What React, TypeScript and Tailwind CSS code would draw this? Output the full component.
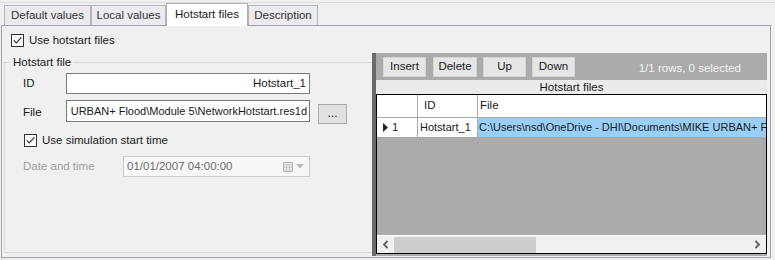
import React from "react";

const tabs = [
  { label: "Default values", w: "w-[87px]" },
  { label: "Local values", w: "w-[75px]" },
  { label: "Hotstart files", w: "w-[82px]", active: true },
  { label: "Description", w: "w-[70px]" },
];

const fullPath =
  "C:\\Users\\nsd\\OneDrive - DHI\\Documents\\MIKE URBAN+ Flood\\Module 5\\NetworkHotstart.res1d";

function Check() {
  return (
    <span className="flex h-[13px] w-[13px] shrink-0 items-center justify-center border border-[#333] bg-white">
      <svg width="11" height="11" viewBox="0 0 11 11">
        <path d="M1.8 5.4 L4.2 7.9 L9.4 2.3" fill="none" stroke="#333" strokeWidth="1.2" />
      </svg>
    </span>
  );
}

function ToolButton({ label, w }: { label: string; w: string }) {
  return (
    <div className={`flex h-[20px] ${w} items-center justify-center border border-[#d6d6d6] bg-[#e6e6e6] text-[#1a1a1a]`}>
      {label}
    </div>
  );
}

export default function App() {
  return (
    <div className="h-[260px] w-[775px] overflow-hidden bg-[#f0f0f0] font-['Liberation_Sans',Arial,sans-serif] text-[11px] text-[#1a1a1a]">
      <div className="h-[2px]" />
      <div className="border-t border-[#dcdcdc]" />

      {/* tab strip */}
      <div className="relative z-10 -mb-px flex h-[23px] items-end pl-[4px] text-[11.5px]">
        {tabs.map((t) =>
          t.active ? (
            <div
              key={t.label}
              className={`flex h-[23px] ${t.w} items-center justify-center border border-b-0 border-[#b0b0b8] bg-white pb-[1px]`}
            >
              {t.label}
            </div>
          ) : (
            <div
              key={t.label}
              className={`mb-[1px] flex h-[20px] ${t.w} items-center justify-center border border-b-0 border-[#b4b4bc] bg-[#ebebef] text-[#333]`}
            >
              {t.label}
            </div>
          )
        )}
      </div>

      {/* tab page */}
      <div className="ml-[1px] flex h-[233px] w-[770px] flex-col border border-[#a0a0aa]">
        <div className="flex h-[27px] items-start gap-[5px] pl-[9px] pt-[8px] text-[11.5px]">
          <Check />
          <span className="leading-[13px]">Use hotstart files</span>
        </div>

        <div className="flex h-[204px]">
          {/* left: group box */}
          <div className="w-[370px] pl-[2px] pt-[9px]">
            <div className="relative h-[191px] border-b border-l border-t border-[#d8d8d8] pl-[18px] pt-[10px]">
              <span className="absolute -top-[8px] left-[6px] bg-[#f0f0f0] px-[2px] text-[11.5px] leading-[14px]">
                Hotstart file
              </span>

              <div className="flex h-[21px] items-center">
                <span className="w-[43px] text-[11.5px]">ID</span>
                <div className="flex h-[21px] w-[244px] items-center justify-end border border-[#7a7a7a] bg-white px-[3px] text-[11.5px]">
                  Hotstart_1
                </div>
              </div>

              <div className="mt-[6px] flex items-start">
                <span className="w-[43px] pt-[4px] text-[11.5px]">File</span>
                <div className="flex h-[22px] w-[244px] items-center justify-end overflow-hidden whitespace-nowrap border border-[#7a7a7a] bg-white px-[2px]">
                  <span className="shrink-0">{fullPath}</span>
                </div>
                <div className="ml-[8px] mt-[4px] flex h-[20px] w-[29px] items-center justify-center border border-[#adadad] bg-[#e1e1e1] pb-[2px] text-[12px]">
                  ...
                </div>
              </div>

              <div className="mt-[10px] flex items-center gap-[5px] pl-[1px] text-[11.5px]">
                <Check />
                <span className="leading-[13px]">Use simulation start time</span>
              </div>

              <div className="mt-[9px] flex items-center">
                <span className="w-[100px] text-[11.5px] text-[#a0a0a0]">Date and time</span>
                <div className="flex h-[21px] w-[187px] items-center justify-between border border-[#cccccc] bg-[#f7f7f7] pl-[3px] pr-[5px] text-[11.5px] text-[#6d6d6d]">
                  <span>01/01/2007 04:00:00</span>
                  <span className="flex items-center gap-[3px]">
                    <svg width="10" height="10" viewBox="0 0 10 10">
                      <rect x="0.5" y="0.5" width="9" height="9" fill="#ececec" stroke="#b8b8b8" />
                      <path d="M0.5 3 H9.5 M0.5 5.5 H9.5 M0.5 8 H9.5 M3.5 3 V9.5 M6.5 3 V9.5" stroke="#c8c8c8" strokeWidth="1" />
                    </svg>
                    <svg width="8" height="5" viewBox="0 0 8 5">
                      <path d="M0 0 H8 L4 4.5 Z" fill="#b8b8b8" />
                    </svg>
                  </span>
                </div>
              </div>
            </div>
          </div>

          {/* right: grid panel */}
          <div className="flex h-[203px] w-[395px] bg-[#ababab] text-[11.5px]">
            <div className="w-[4px] bg-[#6a6a6a]" />
            <div className="flex flex-1 flex-col">
              <div className="flex h-[27px] items-start pt-[4px] pl-[7px] pr-[26px]">
                <ToolButton label="Insert" w="w-[43px]" />
                <div className="w-[7px]" />
                <ToolButton label="Delete" w="w-[44px]" />
                <div className="w-[6px]" />
                <ToolButton label="Up" w="w-[43px]" />
                <div className="w-[6px]" />
                <ToolButton label="Down" w="w-[43px]" />
                <span className="ml-auto pt-[3px] text-[#f4f4f4]">1/1 rows, 0 selected</span>
              </div>
              <div className="flex h-[14px] items-center justify-center bg-[#ebebeb] leading-[14px]">
                Hotstart files
              </div>
              <div className="flex h-[160px] w-[391px] flex-col border border-black">
                <div className="flex h-[23px] border-b border-[#a8a8a8] bg-white">
                  <div className="w-[41px] border-r border-[#a8a8a8]" />
                  <div className="flex w-[60px] items-center border-r border-[#a8a8a8] pl-[6px]">ID</div>
                  <div className="flex flex-1 items-center pl-[2px]">File</div>
                </div>
                <div className="flex h-[20px] border-b border-[#a8a8a8]">
                  <div className="flex w-[41px] items-center border-r border-[#a8a8a8] bg-white pl-[6px]">
                    <svg width="5" height="9" viewBox="0 0 5 9">
                      <path d="M0 0 L5 4.5 L0 9 Z" fill="#222" />
                    </svg>
                    <span className="ml-[4px]">1</span>
                  </div>
                  <div className="flex w-[60px] items-center border-r border-[#a8a8a8] bg-white pl-[2px] text-[11px]">Hotstart_1</div>
                  <div className="flex min-w-0 flex-1 items-center overflow-hidden whitespace-nowrap bg-[#99cff7] pl-[1px] text-[11px]">
                    {fullPath}
                  </div>
                </div>
                <div className="flex-1" />
                <div className="flex h-[18px] items-center border-t border-white bg-[#f0f0f0]">
                  <div className="flex w-[17px] items-center justify-center">
                    <svg width="7" height="9" viewBox="0 0 7 9">
                      <path d="M5.5 1 L2 4.5 L5.5 8" fill="none" stroke="#606060" strokeWidth="1.8" />
                    </svg>
                  </div>
                  <div className="h-[16px] w-[142px] bg-[#cdcdcd]" />
                  <div className="flex-1" />
                  <div className="flex w-[17px] items-center justify-center">
                    <svg width="7" height="9" viewBox="0 0 7 9">
                      <path d="M1.5 1 L5 4.5 L1.5 8" fill="none" stroke="#606060" strokeWidth="1.8" />
                    </svg>
                  </div>
                </div>
              </div>
            </div>
          </div>
        </div>
      </div>
    </div>
  );
}
